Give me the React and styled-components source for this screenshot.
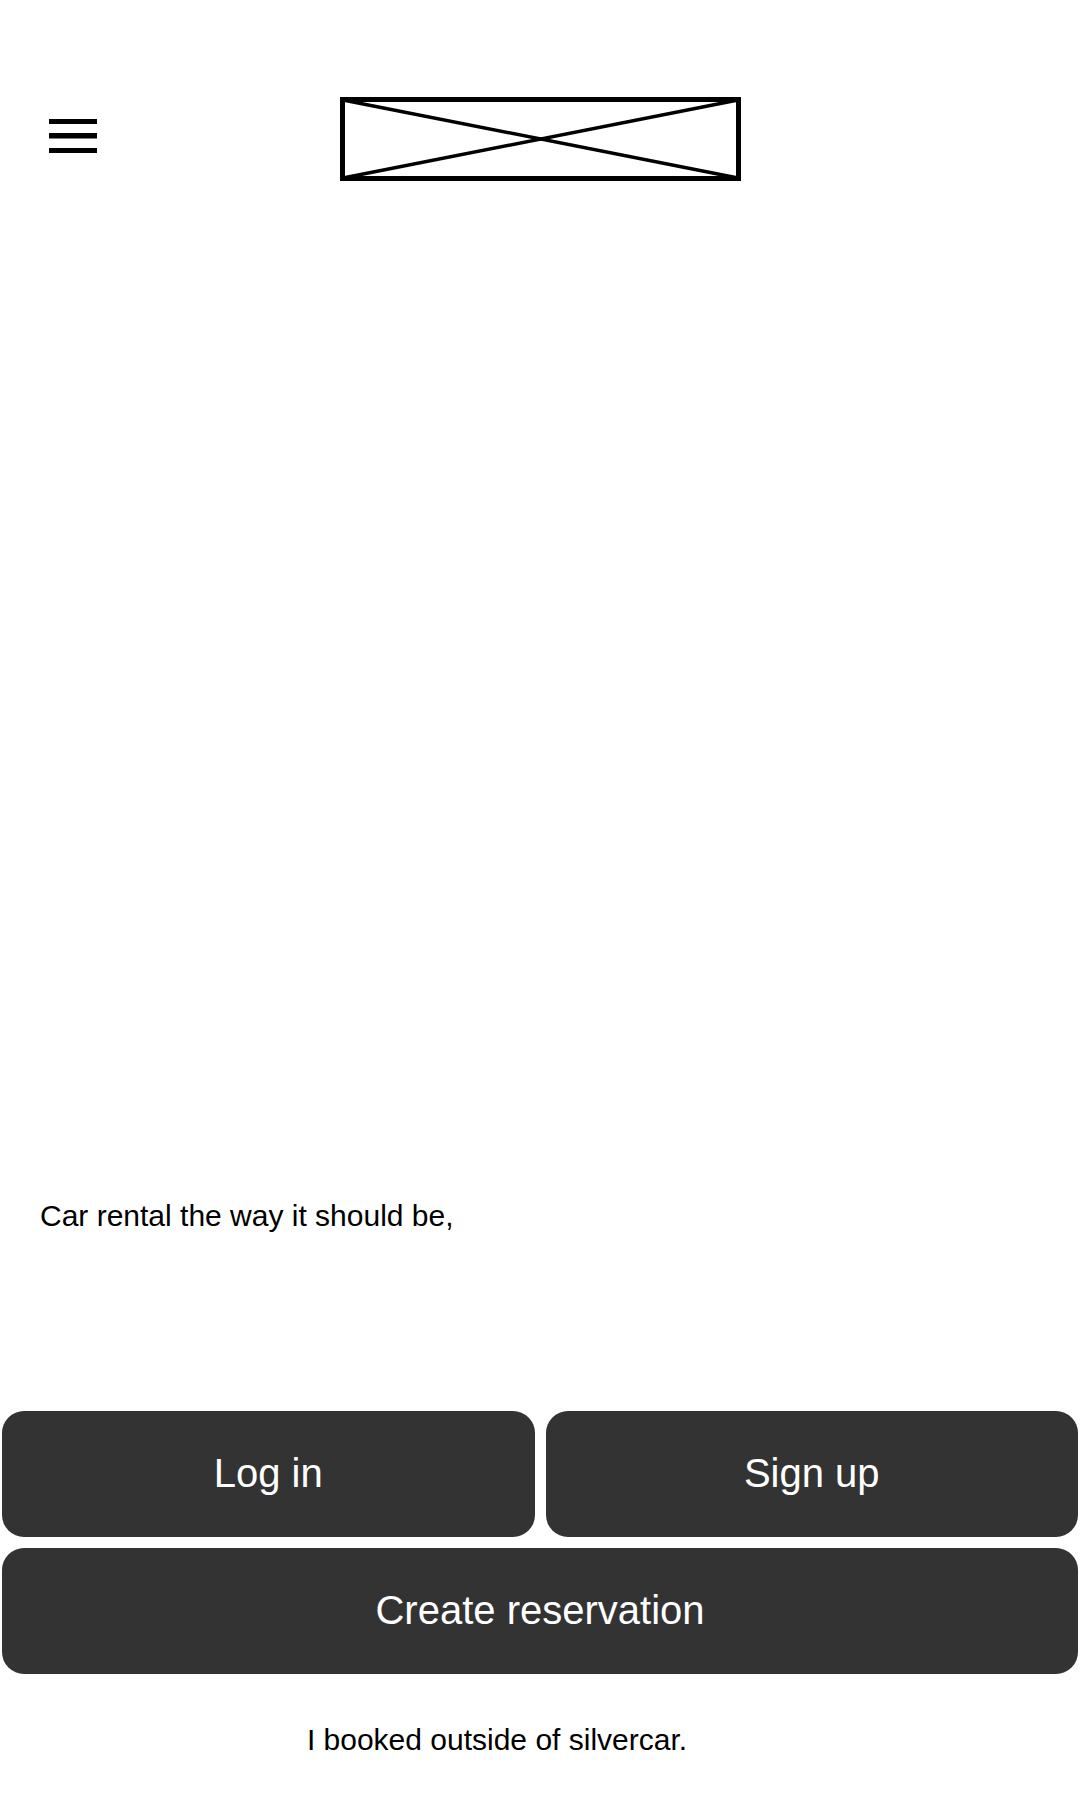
import React from "react";
import styled, { createGlobalStyle } from "styled-components";

const GlobalStyle = createGlobalStyle`
  html, body {
    margin: 0;
    padding: 0;
    background: #fff;
  }
  body {
    font-family: "Liberation Sans", Arial, sans-serif;
    color: #000;
  }
`;

const Page = styled.div`
  width: 1080px;
  min-height: 1800px;
  display: flex;
  flex-direction: column;
`;

const Header = styled.header`
  display: grid;
  grid-template-columns: 1fr auto 1fr;
  align-items: start;
  margin-top: 97px;
  height: 83px;
`;

const MenuButton = styled.button`
  justify-self: start;
  display: flex;
  align-items: center;
  margin: 22px 0 0 49px;
  padding: 0;
  border: 0;
  background: none;
  cursor: pointer;
`;

const Tagline = styled.p`
  margin: 1019px 0 0;
  padding-left: 40px;
  font-size: 30px;
  line-height: 1.15;
`;

const Actions = styled.div`
  display: grid;
  grid-template-columns: 1fr 1fr;
  gap: 11px;
  margin-top: 177px;
  padding: 0 2px;
`;

const ActionButton = styled.button`
  grid-column: ${(p) => (p.wide ? "1 / -1" : "auto")};
  height: 126px;
  display: flex;
  align-items: center;
  justify-content: center;
  border: 0;
  border-radius: 22px;
  background: #333333;
  color: #fff;
  font-family: "Liberation Sans", Arial, sans-serif;
  font-size: 40px;
  cursor: pointer;
`;

const OutsideLink = styled.a`
  margin-top: 49px;
  padding-right: 86px;
  text-align: center;
  font-size: 30px;
  line-height: 1.15;
  color: #000;
  text-decoration: none;
`;

const Hamburger = () => (
  <svg width="48" height="34" viewBox="0 0 48 34">
    <rect x="0" y="0" width="48" height="5" fill="#000" />
    <rect x="0" y="14" width="48" height="5.5" fill="#000" />
    <rect x="0" y="29" width="48" height="5" fill="#000" />
  </svg>
);

const LogoPlaceholder = () => (
  <svg width="401" height="84" viewBox="0 0 401 84">
    <line x1="3" y1="3" x2="398" y2="81" stroke="#000" strokeWidth="3.5" />
    <line x1="3" y1="81" x2="398" y2="3" stroke="#000" strokeWidth="3.5" />
    <rect x="2.5" y="2.5" width="396" height="79" fill="none" stroke="#000" strokeWidth="5" />
  </svg>
);

export default function App() {
  return (
    <>
      <GlobalStyle />
      <Page>
        <Header>
          <MenuButton aria-label="Menu">
            <Hamburger />
          </MenuButton>
          <LogoPlaceholder />
          <span />
        </Header>

        <Tagline>Car rental the way it should be,</Tagline>

        <Actions>
          <ActionButton>Log in</ActionButton>
          <ActionButton>Sign up</ActionButton>
          <ActionButton wide>Create reservation</ActionButton>
        </Actions>

        <OutsideLink href="#">I booked outside of silvercar.</OutsideLink>
      </Page>
    </>
  );
}
